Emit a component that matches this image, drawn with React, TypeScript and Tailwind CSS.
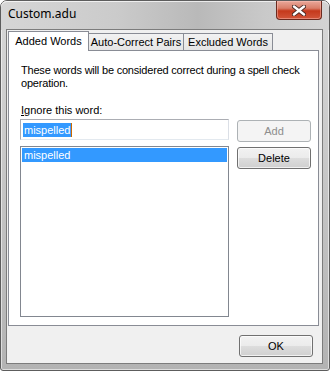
import React from "react";

const ui = { fontFamily: '"Liberation Sans", Arial, sans-serif' };

function Tab({ label, active, width }: { label: string; active?: boolean; width: string }) {
  if (active) {
    return (
      <div
        className={`${width} relative z-10 -mb-px h-[20px] border border-b-0 border-[#898c95] bg-white flex items-center justify-center text-[11px] text-black pb-[1px]`}
      >
        {label}
      </div>
    );
  }
  return (
    <div
      className={`${width} -ml-px h-[17px] border border-b-0 border-[#898c95] bg-[linear-gradient(to_bottom,#f2f2f2,#e5e5e5)] flex items-center justify-center text-[11px] text-black pt-[1px]`}
    >
      {label}
    </div>
  );
}

function Button({ children, disabled }: { children: React.ReactNode; disabled?: boolean }) {
  if (disabled) {
    return (
      <div className="w-[74px] h-[22px] shrink-0 rounded-[3px] border border-[#adb2b5] bg-[#f4f4f4] flex items-center justify-center text-[11px] text-[#8d8d8d]">
        {children}
      </div>
    );
  }
  return (
    <div className="w-[74px] h-[22px] shrink-0 rounded-[3px] border border-[#707070] bg-[linear-gradient(to_bottom,#f2f2f2_0%,#ebebeb_50%,#dddddd_51%,#cfcfcf_100%)] shadow-[inset_0_0_0_1px_rgba(255,255,255,0.7)] flex items-center justify-center text-[11px] text-black">
      {children}
    </div>
  );
}

function CloseButton() {
  return (
    <div className="absolute right-[7px] top-0 w-[46px] h-[19px] rounded-b-[4px] border border-t-0 border-[#6b2a1f] bg-[linear-gradient(to_bottom,#e9a89a_0%,#d97e69_40%,#c5391c_55%,#d2553a_100%)] shadow-[inset_0_0_0_1px_rgba(255,200,190,0.45)] flex items-center justify-center">
      <svg width="14" height="11" viewBox="0 0 14 11">
        <path d="M2 1.5 L12 9.5 M12 1.5 L2 9.5" stroke="#4a2a24" strokeWidth="4.2" strokeLinecap="round" />
        <path d="M2 1.5 L12 9.5 M12 1.5 L2 9.5" stroke="#ffffff" strokeWidth="2.4" strokeLinecap="round" />
      </svg>
    </div>
  );
}

export default function App() {
  return (
    <div className="w-[330px] h-[371px] bg-white" style={ui}>
      <div className="relative w-[330px] h-[371px] rounded-t-[7px] rounded-b-[3px] border border-[#5d5d5d] bg-[linear-gradient(to_bottom,#d8d8d8_0%,#c9c9c9_40%,#b3b3b3_100%)] shadow-[inset_0_0_0_1px_rgba(255,255,255,0.55)] flex flex-col pl-[5px] pr-[6px] pb-[6px]">
        <div className="absolute inset-x-0 top-0 h-[29px] rounded-t-[6px] bg-[linear-gradient(to_right,#d6d6d6_0%,#cbcbcb_35%,#b9b9b9_60%,#c9c9c9_80%,#d3d3d3_100%)] shadow-[inset_0_1px_0_rgba(255,255,255,0.7)]" />
        <div className="relative h-[28px] flex items-center pl-[2px] pb-[2px]">
          <span className="text-[12px] text-black" style={{ fontFamily: '"Noto Sans", "Open Sans", sans-serif' }}>
            Custom.adu
          </span>
        </div>
        <CloseButton />

        <div className="relative flex-1 border border-[#7c7c7c] bg-[#f0f0f0] flex flex-col">
          <div className="flex-1 flex flex-col pl-px pr-[3px] pt-[1px]">
            <div className="flex items-end">
              <Tab label="Added Words" active width="w-[81px]" />
              <Tab label="Auto-Correct Pairs" width="w-[96px]" />
              <Tab label="Excluded Words" width="w-[90px]" />
            </div>
            <div className="flex-1 border border-[#898c95] bg-white pl-[11px] pr-[7px] pt-[13px] text-[11px] text-black leading-[13px]">
              <p className="pl-px tracking-[-0.2px]">
                These words will be considered correct during a spell check operation.
              </p>
              <p className="mt-[14px] pl-px">
                <span className="underline">I</span>gnore this word:
              </p>
              <div className="mt-[2px] flex gap-[8px]">
                <div className="w-[209px] shrink-0 flex flex-col gap-[6px]">
                  <div className="h-[21px] border border-[#abadb3] border-b-[#e3e9ef] border-r-[#dbdfe6] flex items-center pl-[2px]">
                    <span className="bg-[#3399ff] text-white px-px leading-[14px]">mispelled</span>
                    <span className="w-px h-[14px] bg-[#cc6a00]" />
                  </div>
                  <div className="h-[171px] border border-[#828790] p-px">
                    <div className="h-[14px] bg-[#3399ff] text-white pl-[2px] leading-[14px]">mispelled</div>
                  </div>
                </div>
                <div className="flex flex-col gap-[5px] pt-px">
                  <Button disabled>Add</Button>
                  <Button>Delete</Button>
                </div>
              </div>
            </div>
          </div>
          <div className="h-[37px] flex justify-end items-start pt-[9px] pr-[9px]">
            <Button>OK</Button>
          </div>
        </div>
      </div>
    </div>
  );
}
